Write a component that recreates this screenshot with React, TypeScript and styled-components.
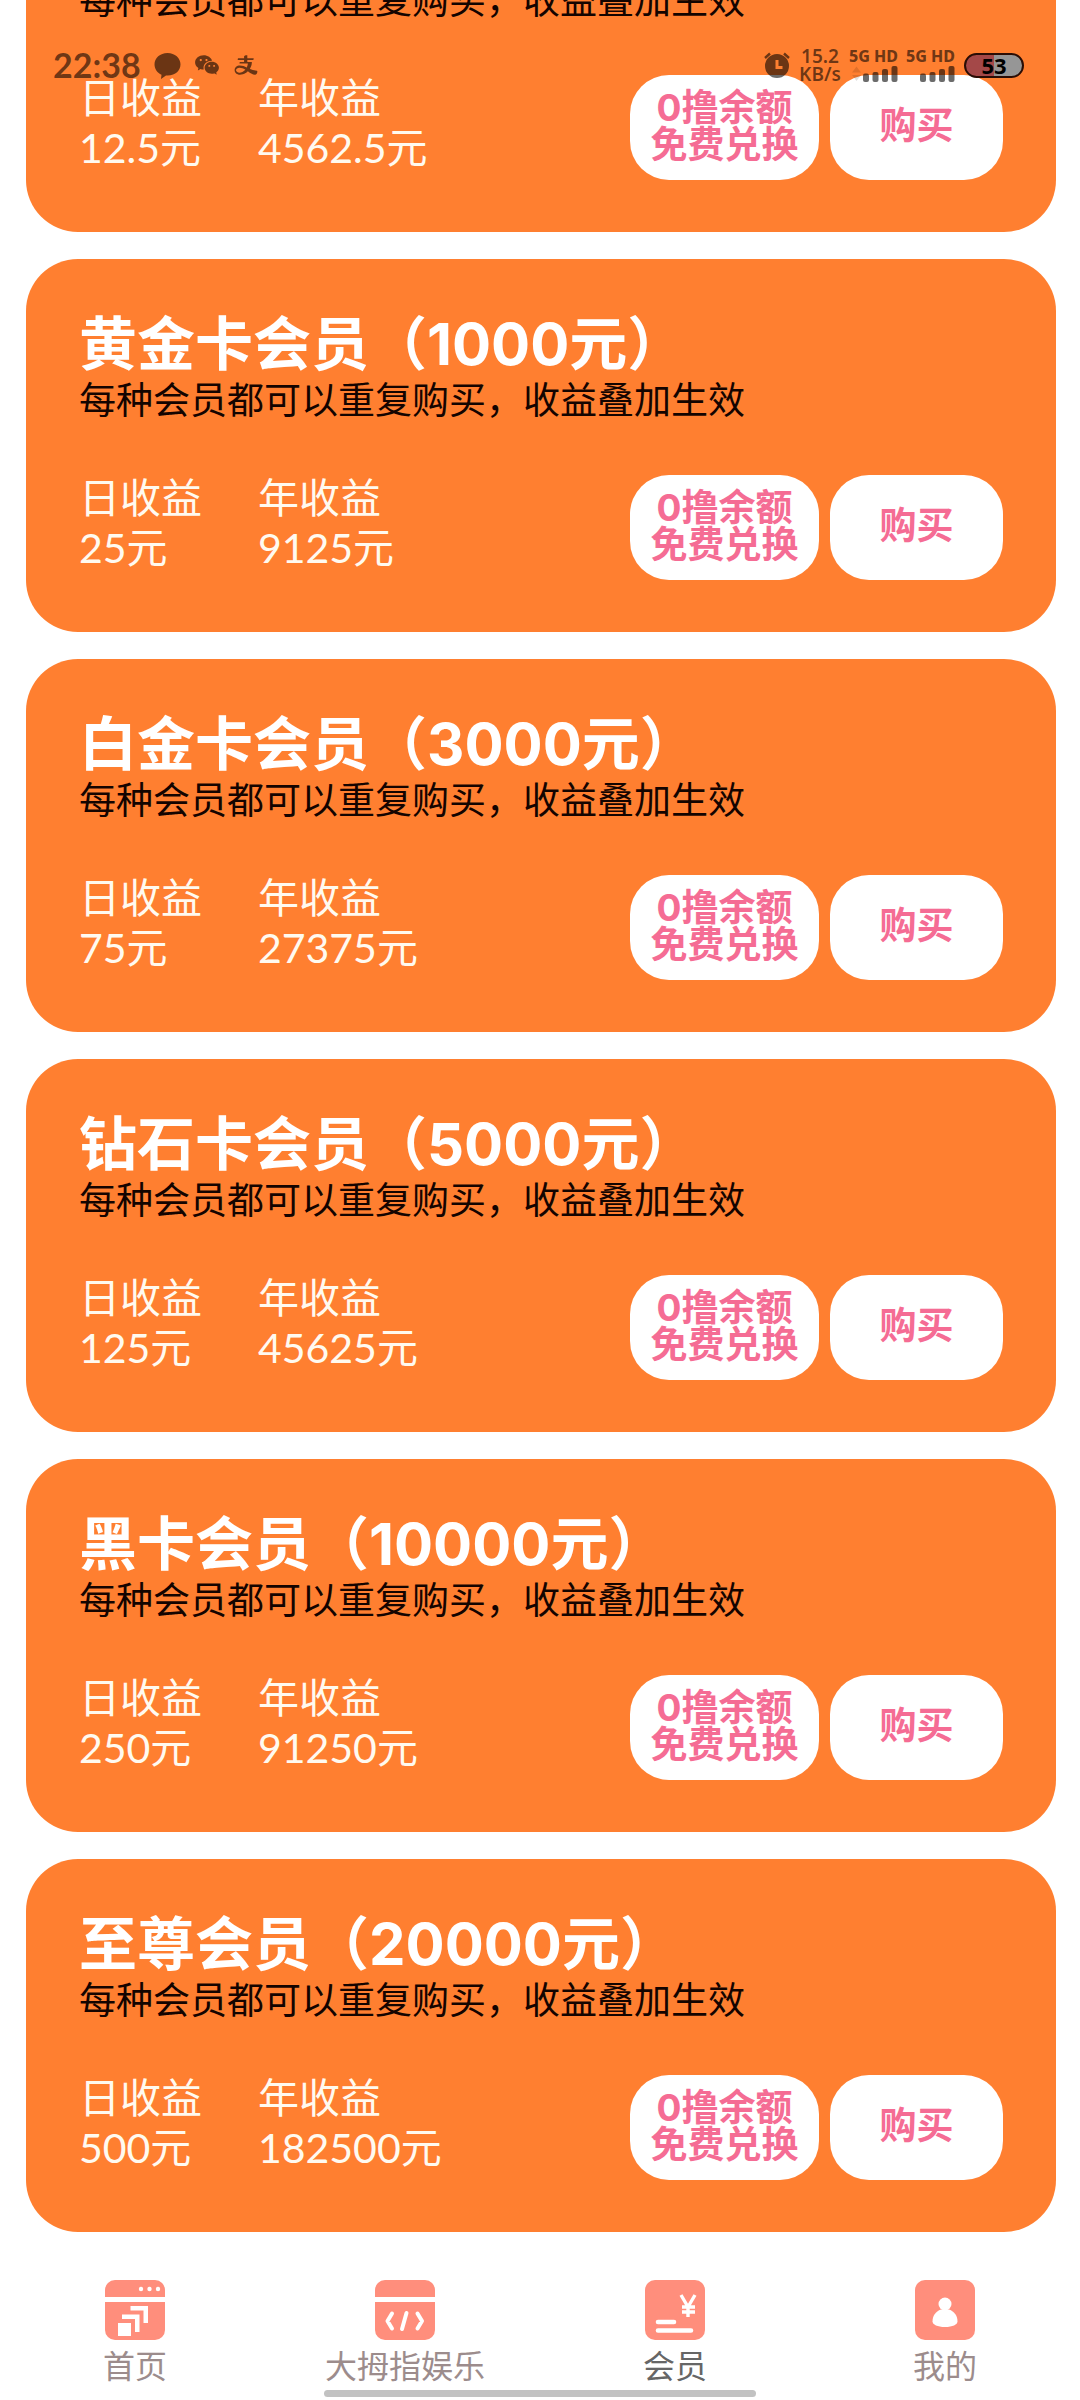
import React from 'react';
import styled, { createGlobalStyle } from 'styled-components';
import { AiOutlineAlipay } from 'react-icons/ai';
import { RiWechatFill } from 'react-icons/ri';

const GlobalStyle = createGlobalStyle`
  * { box-sizing: border-box; }
  body {
    margin: 0;
    background: #fff;
    font-family: Lato, "Noto Sans CJK SC", sans-serif;
  }
  button { font: inherit; border: 0; cursor: pointer; }
  h2, p, dl, dt, dd { margin: 0; }
`;

const Screen = styled.div`
  position: relative;
  display: flex;
  flex-direction: column;
  height: 100vh;
  overflow: hidden;
`;

const StatusBar = styled.header`
  position: absolute;
  z-index: 2;
  inset: 0 0 auto 0;
  display: flex;
  justify-content: space-between;
  align-items: flex-start;
  padding: 47px 56px 0 53px;
  color: rgba(0, 0, 0, 0.58);
`;

const StatusGroup = styled.div<{ $gap: number }>`
  display: flex;
  align-items: center;
  gap: ${(p) => p.$gap}px;
  height: 36px;
`;

const Clock = styled.time`
  font-size: 34px;
  line-height: 36px;
  font-weight: 700;
`;

const NetSpeed = styled.div`
  display: flex;
  flex-direction: column;
  align-items: center;
  width: 42px;
  font: 600 19px/18px "Noto Sans", sans-serif;
`;

const Sim = styled.div`
  display: flex;
  flex-direction: column;
  align-items: flex-end;
  width: 48px;
  font: 800 16px/18px "Noto Sans", sans-serif;
  white-space: nowrap;
`;

const Battery = styled.div`
  display: flex;
  align-items: center;
  justify-content: center;
  width: 60px;
  height: 25px;
  border: 2px solid #2a0d05;
  border-radius: 13px;
  background: linear-gradient(to right, #a44848 50%, #969696 50%);
  color: #000;
  font: 700 22px/22px "Noto Sans", sans-serif;
`;

const CardList = styled.main`
  flex: 1;
  min-height: 0;
  display: flex;
  flex-direction: column;
  justify-content: flex-end;
  gap: 27px;
  padding: 0 24px 0 26px;
  overflow: hidden;
`;

const Card = styled.section`
  flex-shrink: 0;
  padding: 52px 53px 52px;
  border-radius: 52px;
  background: #ff7f30;
`;

const CardTitle = styled.h2`
  color: #fff;
  font-family: Inter, "Noto Sans CJK SC", sans-serif;
  font-size: 58px;
  line-height: 66px;
  font-weight: 700;
`;

const CardNote = styled.p`
  color: #140400;
  font-size: 37px;
  line-height: 46px;
`;

const CardBody = styled.div`
  display: flex;
  align-items: flex-start;
  justify-content: space-between;
  margin-top: 50px;
`;

const Stats = styled.dl`
  display: flex;
  gap: 56px;
  color: #fffaf0;
  font-size: 41px;
  line-height: 50px;
`;

const Stat = styled.div`
  min-width: 123px;
`;

const Actions = styled.div`
  display: flex;
  gap: 11px;
  padding-top: 2px;
`;

const Action = styled.button<{ $width: number }>`
  width: ${(p) => p.$width}px;
  height: 105px;
  padding: 0 0 4px;
  border-radius: 39px;
  background: #fff;
  color: #f56c94;
  font-family: Inter, "Noto Sans CJK SC", sans-serif;
  font-size: 37px;
  line-height: 37px;
  font-weight: 700;
`;

const TabBar = styled.nav`
  position: relative;
  display: grid;
  grid-template-columns: repeat(4, 1fr);
  height: 168px;
  padding-top: 48px;
`;

const Tab = styled.a<{ $active?: boolean }>`
  display: flex;
  flex-direction: column;
  align-items: center;
  gap: 6px;
  color: ${(p) => (p.$active ? '#666' : '#9c8c8c')};
  font-size: 32px;
  line-height: 40px;
  text-decoration: none;
`;

const HomeIndicator = styled.div`
  position: absolute;
  left: 30%;
  bottom: 3px;
  width: 40%;
  height: 7px;
  border-radius: 4px;
  background: #c2c2c2;
`;

const TAB_TINT = '#ff8e7c';

const ChatIcon = () => (
  <svg width="27" height="27" viewBox="0 0 27 27" fill="currentColor" aria-hidden="true">
    <path d="M13.5 1C6 1 .5 6 .5 12.3c0 5 3 8.8 7 10.4L7 27l5-3.500c9 .8 14.500-4.700 14.500-11.200C26.500 6 21 1 13.500 1z" />
  </svg>
);

const AlarmIcon = () => (
  <svg width="26" height="26" viewBox="0 0 26 26" aria-hidden="true">
    <path
      fill="currentColor"
      fillRule="evenodd"
      d="M13 2a12 12 0 1 0 0 24 12 12 0 0 0 0-24zm-1.500 6h3v6h4v3h-7z"
    />
    <path d="M1 6l5-4.500M25 6l-5-4.500" stroke="currentColor" strokeWidth="2.400" />
  </svg>
);

const SignalIcon = ({ arrows }: { arrows?: boolean }) => (
  <svg width="48" height="18" viewBox="0 0 48 18" fill="currentColor" aria-hidden="true">
    {arrows && <path d="M2 7.500l4.500-6 4.500 6zM2 10h9l-4.500 6z" opacity=".2" />}
    <rect x="13" y="8.500" width="6" height="8.500" rx="2" />
    <rect x="22.500" y="7" width="6" height="10" rx="2" />
    <rect x="32" y="4" width="6" height="13" rx="2" />
    <rect x="41.500" y="1" width="6" height="16" rx="2" />
  </svg>
);

const HomeIcon = () => (
  <svg width="60" height="60" viewBox="0 0 60 60" aria-hidden="true">
    <path fill={TAB_TINT} d="M10 0h40a10 10 0 0 1 10 10v7H0v-7A10 10 0 0 1 10 0zM0 22h60v28a10 10 0 0 1-10 10H10A10 10 0 0 1 0 50z" />
    <g fill="#fff">
      <circle cx="36" cy="9" r="2.200" />
      <circle cx="44.500" cy="9" r="2.200" />
      <circle cx="53" cy="9" r="2.200" />
      <path d="M13 43h13v13H13zM17 34.500h17.500V52H30V39H17zM25.500 26H43v17h-4.500V30.500h-13z" />
    </g>
  </svg>
);

const CodeIcon = () => (
  <svg width="60" height="60" viewBox="0 0 60 60" aria-hidden="true">
    <path fill={TAB_TINT} d="M10 0h40a10 10 0 0 1 10 10v7H0v-7A10 10 0 0 1 10 0zM0 22h60v28a10 10 0 0 1-10 10H10A10 10 0 0 1 0 50z" />
    <path d="M17 33.500l-4.500 7.500 4.500 7.500M31.500 33l-4.500 16M42.500 33.500L47 41l-4.500 7.500" fill="none" stroke="#fff" strokeWidth="4" strokeLinecap="round" strokeLinejoin="round" />
  </svg>
);

const MemberIcon = () => (
  <svg width="60" height="60" viewBox="0 0 60 60" aria-hidden="true">
    <rect width="60" height="60" rx="10" fill={TAB_TINT} />
    <g fill="none" stroke="#fff">
      <path d="M36 15l7 12 7-12M43 26v11M37 27h13M37 32h13" strokeWidth="3.400" />
      <path d="M13 42h16M13 50.500h33" strokeWidth="4.600" strokeLinecap="round" />
    </g>
  </svg>
);

const ProfileIcon = () => (
  <svg width="60" height="60" viewBox="0 0 60 60" aria-hidden="true">
    <rect width="60" height="60" rx="10" fill={TAB_TINT} />
    <circle cx="30" cy="24" r="6.500" fill="#fff" />
    <path fill="#fff" d="M26 29.500h8c5.500 2 8.500 6.500 8.500 12 0 3-5 5.500-12.500 5.500s-12.500-2.500-12.500-5.500c0-5.500 3-10 8.500-12z" />
  </svg>
);

const plans = [
  { title: '白银卡会员（500元）', daily: '12.5元', yearly: '4562.5元' },
  { title: '黄金卡会员（1000元）', daily: '25元', yearly: '9125元' },
  { title: '白金卡会员（3000元）', daily: '75元', yearly: '27375元' },
  { title: '钻石卡会员（5000元）', daily: '125元', yearly: '45625元' },
  { title: '黑卡会员（10000元）', daily: '250元', yearly: '91250元' },
  { title: '至尊会员（20000元）', daily: '500元', yearly: '182500元' },
];

const tabs = [
  { label: '首页', Icon: HomeIcon },
  { label: '大拇指娱乐', Icon: CodeIcon },
  { label: '会员', Icon: MemberIcon, active: true },
  { label: '我的', Icon: ProfileIcon },
];

export default function App() {
  return (
    <Screen>
      <GlobalStyle />
      <StatusBar>
        <StatusGroup $gap={13}>
          <Clock>22:38</Clock>
          <ChatIcon />
          <RiWechatFill size={26} />
          <AiOutlineAlipay size={26} />
        </StatusGroup>
        <StatusGroup $gap={9}>
          <AlarmIcon />
          <NetSpeed>
            <span>15.2</span>
            <span>KB/s</span>
          </NetSpeed>
          <Sim>
            <span>5G HD</span>
            <SignalIcon arrows />
          </Sim>
          <Sim>
            <span>5G HD</span>
            <SignalIcon />
          </Sim>
          <Battery>53</Battery>
        </StatusGroup>
      </StatusBar>

      <CardList>
        {plans.map((plan) => (
          <Card key={plan.title}>
            <CardTitle>{plan.title}</CardTitle>
            <CardNote>每种会员都可以重复购买，收益叠加生效</CardNote>
            <CardBody>
              <Stats>
                <Stat>
                  <dt>日收益</dt>
                  <dd>{plan.daily}</dd>
                </Stat>
                <Stat>
                  <dt>年收益</dt>
                  <dd>{plan.yearly}</dd>
                </Stat>
              </Stats>
              <Actions>
                <Action type="button" $width={189}>
                  0撸余额
                  <br />
                  免费兑换
                </Action>
                <Action type="button" $width={173}>购买</Action>
              </Actions>
            </CardBody>
          </Card>
        ))}
      </CardList>

      <TabBar>
        {tabs.map(({ label, Icon, active }) => (
          <Tab key={label} href="#" $active={active} aria-current={active ? 'page' : undefined}>
            <Icon />
            {label}
          </Tab>
        ))}
        <HomeIndicator />
      </TabBar>
    </Screen>
  );
}
